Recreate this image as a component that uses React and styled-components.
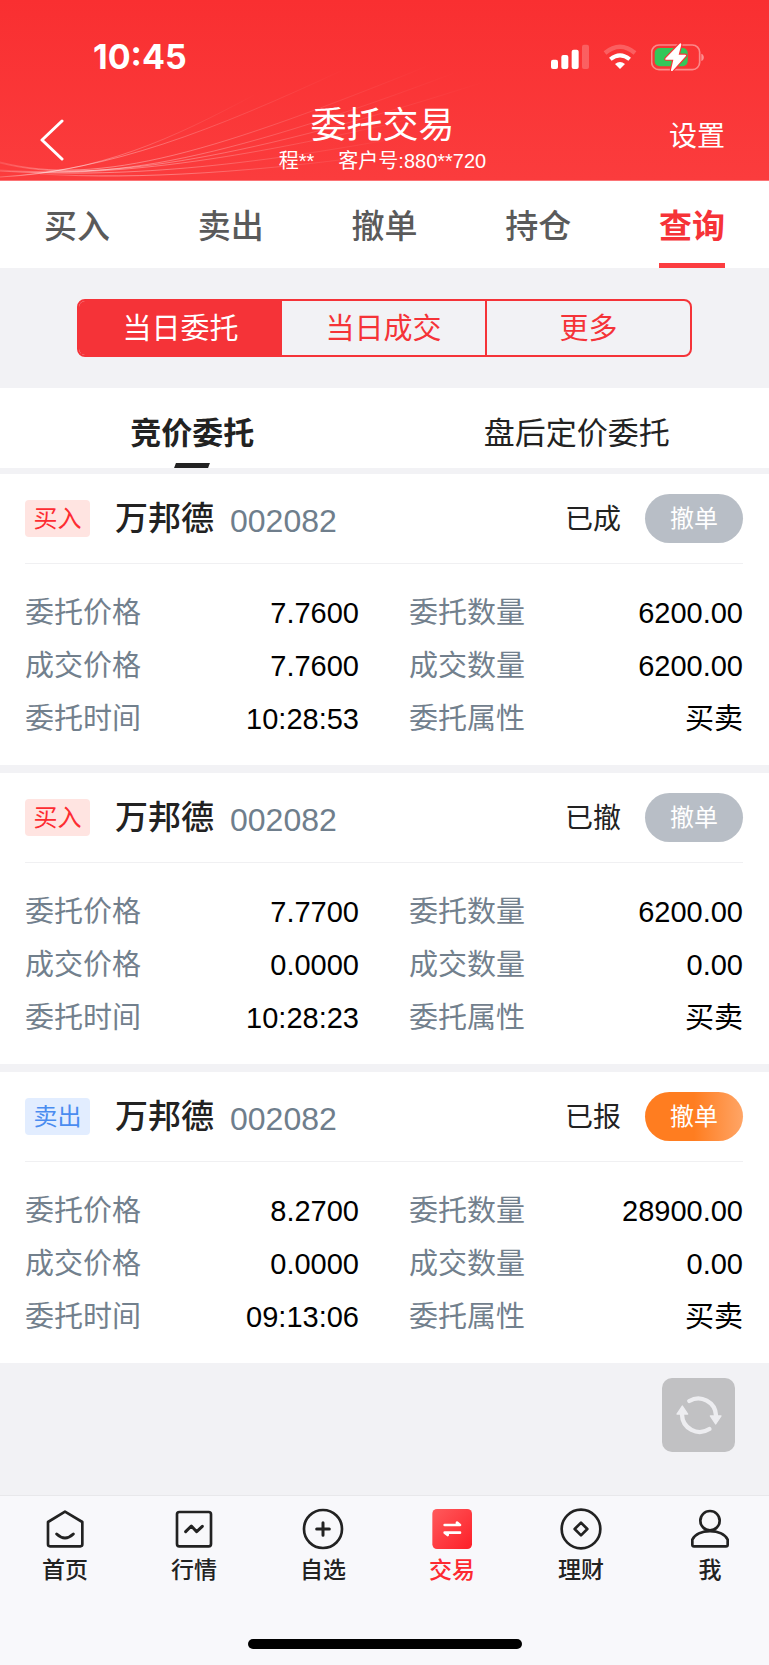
import React from "react";
import styled, { createGlobalStyle, css } from "styled-components";

const GlobalStyle = createGlobalStyle`
  * { box-sizing: border-box; }
  body {
    margin: 0;
    background: #f2f2f5;
    font-family: "Liberation Sans", "Noto Sans CJK SC", sans-serif;
    color: #222;
  }
  button { font: inherit; border: 0; padding: 0; background: none; cursor: pointer; }
  a { color: inherit; text-decoration: none; }
  h1, h2, dl, dd { margin: 0; font-weight: 400; }
  svg { display: block; }
`;

const Page = styled.div`
  min-height: 100vh;
  display: flex;
  flex-direction: column;
`;

const Header = styled.header`
  position: relative;
  background: linear-gradient(#f92f31, #fb3c3d);
  border-bottom: 1px solid #fc7476;
  color: #fff;
`;

const Waves = styled.svg`
  position: absolute;
  left: 0;
  bottom: 0;
`;

const StatusBar = styled.div`
  position: relative;
  display: flex;
  justify-content: space-between;
  align-items: center;
  height: 100px;
  padding: 14px 64px 0 93px;
`;

const Clock = styled.time`
  font: 700 34px/40px Inter, sans-serif;
`;

const StatusIcons = styled.div`
  display: flex;
  align-items: center;
  gap: 14px;
`;

const TitleBar = styled.div`
  position: relative;
  display: grid;
  grid-template-columns: 1fr auto 1fr;
  align-items: center;
  height: 80px;
  padding: 0 44px 0 40px;
`;

const BackButton = styled.button`
  justify-self: start;
  color: #fff;
`;

const Titles = styled.div`
  text-align: center;
`;

const Title = styled.h1`
  font-size: 36px;
  line-height: 42px;
`;

const Account = styled.div`
  display: flex;
  justify-content: center;
  gap: 24px;
  font-size: 20px;
  line-height: 28px;
`;

const SettingsLink = styled.a`
  justify-self: end;
  font-size: 28px;
  line-height: 36px;
  padding-bottom: 6px;
`;

const MainTabs = styled.nav`
  display: flex;
  height: 87px;
  background: #fff;
`;

const MainTab = styled.button`
  flex: 1;
  display: flex;
  justify-content: center;
  font-size: 33px;
  line-height: 40px;
  font-weight: ${(p) => (p.$active ? 700 : 500)};
  color: ${(p) => (p.$active ? "#f63338" : "#5a5a5a")};

  span {
    height: 87px;
    padding-top: 26px;
    border-bottom: 5px solid ${(p) => (p.$active ? "#fc3d40" : "transparent")};
  }
`;

const SegmentBar = styled.div`
  padding: 31px 10%;
`;

const Segments = styled.div`
  display: flex;
  height: 58px;
  border: 2px solid #f53338;
  border-radius: 8px;
  overflow: hidden;
`;

const Segment = styled.button`
  flex: 1;
  padding-bottom: 4px;
  font-size: 29px;
  color: ${(p) => (p.$active ? "#fff" : "#f53338")};
  background: ${(p) => (p.$active ? "#f53338" : "transparent")};

  & + & + & { border-left: 2px solid #f53338; }
`;

const SubTabs = styled.div`
  display: flex;
  height: 86px;
  background: #fff;
  border-bottom: 6px solid #f2f2f5;
`;

const SubTab = styled.button`
  position: relative;
  flex: 1;
  padding-top: 4px;
  font-size: 31px;
  color: #222;
  font-weight: ${(p) => (p.$active ? 700 : 400)};

  ${(p) =>
    p.$active &&
    css`
      &::after {
        content: "";
        position: absolute;
        left: 50%;
        bottom: 0;
        width: 34px;
        height: 5px;
        margin-left: -17px;
        background: #222;
        transform: skewX(-20deg);
      }
    `}
`;

const Orders = styled.main`
  display: grid;
  gap: 8px;
`;

const OrderCard = styled.article`
  background: #fff;
  padding: 0 26px 0 25px;
`;

const OrderHead = styled.div`
  display: flex;
  align-items: center;
  height: 90px;
  border-bottom: 1px solid #f0f0f2;
`;

const SideTag = styled.span`
  width: 65px;
  margin-right: 25px;
  border-radius: 4px;
  text-align: center;
  font-size: 24px;
  line-height: 37px;
  color: ${(p) => (p.$sell ? "#4a8cf0" : "#fd2c32")};
  background: ${(p) => (p.$sell ? "#e2edff" : "#ffe4e1")};
`;

const StockName = styled.h2`
  font-size: 33px;
  line-height: 40px;
  font-weight: 500;
  margin-right: 16px;
`;

const StockCode = styled.span`
  padding-top: 4px;
  font-size: 32px;
  line-height: 40px;
  color: #6f7e8c;
`;

const OrderState = styled.span`
  margin: 0 24px 0 auto;
  padding-bottom: 4px;
  font-size: 28px;
`;

const CancelButton = styled.button`
  width: 98px;
  height: 49px;
  padding-bottom: 4px;
  border-radius: 25px;
  font-size: 24px;
  color: #fff;
  background: linear-gradient(90deg, #ff7d20 50%, #ffa566);

  &:disabled {
    color: #fff;
    background: #b8bec6;
    cursor: default;
  }
`;

const Fields = styled.dl`
  display: grid;
  grid-template-columns: 1fr 1fr;
  column-gap: 50px;
  padding: 23px 0 19px;
`;

const Field = styled.div`
  display: flex;
  justify-content: space-between;
  font-size: 29px;
  line-height: 53px;
`;

const Label = styled.dt`
  color: #72808d;
`;

const Value = styled.dd`
  color: #000;
`;

const Tools = styled.div`
  flex: 1;
  display: flex;
  justify-content: flex-end;
  align-items: flex-start;
  padding: 15px 34px 43px;
`;

const RefreshButton = styled.button`
  display: grid;
  place-items: center;
  width: 73px;
  height: 74px;
  border-radius: 10px;
  background: #c1c1c3;
`;

const BottomBar = styled.footer`
  background: #f8f8fb;
  border-top: 1px solid #e8e8eb;
`;

const BottomNav = styled.nav`
  display: flex;
  justify-content: space-between;
  padding: 12px 9px 0 15px;
`;

const NavLink = styled.a`
  display: flex;
  flex-direction: column;
  align-items: center;
  gap: 5px;
  width: 100px;
  font-size: 23px;
  line-height: 30px;
  font-weight: 500;
  color: ${(p) => (p.$active ? "#fd2a31" : "#222")};
`;

const HomeIndicator = styled.div`
  width: 274px;
  height: 10px;
  margin: 54px auto 16px;
  border-radius: 5px;
  background: #000;
`;

const HeaderWaves = () => (
  <Waves width="520" height="130" viewBox="0 50 520 130" fill="none" aria-hidden="true">
    <defs>
      <linearGradient id="fade" x1="0" y1="0" x2="1" y2="0">
        <stop offset="0" stopColor="#fff" stopOpacity=".12" />
        <stop offset=".18" stopColor="#fff" stopOpacity=".4" />
        <stop offset=".4" stopColor="#fff" stopOpacity=".3" />
        <stop offset=".7" stopColor="#fff" stopOpacity=".12" />
        <stop offset="1" stopColor="#fff" stopOpacity="0" />
      </linearGradient>
    </defs>
    <g stroke="url(#fade)" strokeWidth="1">
      <path d="M0 177C100 172 170 140 256 94" />
      <path d="M0 177C110 170 210 132 345 69" />
      <path d="M0 162C100 188 220 150 430 65" />
      <path d="M0 163C100 188 240 154 457 72" />
      <path d="M0 170C120 178 240 160 484 82" />
      <path d="M0 171C120 178 250 158 440 112" />
      <path d="M0 171C120 178 240 168 420 134" />
      <path d="M40 174C140 180 260 172 400 152" />
    </g>
  </Waves>
);

const SignalIcon = () => (
  <svg width="38" height="26" viewBox="0 0 114 78" fill="#fff">
    <rect x="0" y="47" width="21" height="28" rx="6" />
    <rect x="31" y="33" width="21" height="42" rx="6" />
    <rect x="62" y="17" width="21" height="58" rx="6" />
    <rect x="93" y="2" width="21" height="73" rx="6" opacity=".22" />
  </svg>
);

const WifiIcon = () => (
  <svg width="34" height="26" viewBox="0 0 102 78" fill="none">
    <path d="M6 27Q51-10 96 27" stroke="#fff" strokeOpacity=".22" strokeWidth="13" />
    <path d="M22 46Q51 22 80 46" stroke="#fff" strokeWidth="12" />
    <path d="M36 60Q51 48 66 60L51 75Z" fill="#fff" />
  </svg>
);

const BatteryIcon = () => (
  <svg width="54" height="28" viewBox="0 0 162 84" fill="none">
    <rect x="2" y="6" width="144" height="74" rx="22" stroke="#fff" strokeOpacity=".42" strokeWidth="5" />
    <path d="M151 32c10 3 10 19 0 22Z" fill="#fff" fillOpacity=".45" />
    <rect x="11" y="15" width="99" height="55" rx="15" fill="#34c759" />
    <path
      d="M86 2L44 46q-3 4 2 4H67L60 81q0 5 5 2L104 40q3-5-2-5H83L91 5q-1-6-5-3Z"
      fill="#fff"
      stroke="#f93437"
      strokeWidth="7"
      paintOrder="stroke"
    />
  </svg>
);

const BackIcon = () => (
  <svg width="28" height="44" viewBox="0 0 28 44" fill="none" stroke="#fff" strokeWidth="3" strokeLinecap="round" strokeLinejoin="round">
    <path d="M22 3L2 22L22 41" />
  </svg>
);

const RefreshIcon = () => (
  <svg width="46" height="42" viewBox="0 0 138 126" fill="none" stroke="#ededf0" strokeWidth="13" strokeLinecap="round">
    <path d="M40 21A53 53 0 0 1 120 64" />
    <path d="M100 105A53 53 0 0 1 18 62" />
    <path d="M103 66H135L119 90Z" fill="#ededf0" strokeWidth="4" strokeLinejoin="round" />
    <path d="M3 60H35L19 36Z" fill="#ededf0" strokeWidth="4" strokeLinejoin="round" />
  </svg>
);

const NavIcon = ({ children }) => (
  <svg width="42" height="42" viewBox="0 0 126 126" fill="none" stroke="currentColor" strokeWidth="8" strokeLinecap="round" strokeLinejoin="round" aria-hidden="true">
    {children}
  </svg>
);

const NAV = [
  {
    label: "首页",
    icon: (
      <>
        <path d="M63 11L12 42V109Q12 115 18 115H109Q115 115 115 109V42Z" />
        <path d="M38 78Q63 102 88 78" strokeWidth="9" />
      </>
    ),
  },
  {
    label: "行情",
    icon: (
      <>
        <rect x="12" y="12" width="102" height="103" rx="7" />
        <path d="M38 71L55 54L71 71L88 55" strokeWidth="9" />
      </>
    ),
  },
  {
    label: "自选",
    icon: (
      <>
        <circle cx="63" cy="63" r="57" />
        <path d="M63 44V82M44 63H82" strokeWidth="9" />
      </>
    ),
  },
  {
    label: "交易",
    active: true,
    icon: (
      <>
        <defs>
          <linearGradient id="trade" x1="0" y1="0" x2="1" y2="1">
            <stop offset="0" stopColor="#ff5a5c" />
            <stop offset="1" stopColor="#fd1f28" />
          </linearGradient>
        </defs>
        <rect x="4" y="3" width="119" height="120" rx="14" fill="url(#trade)" stroke="none" />
        <path d="M41 51H87L78 44V51M87 74H41L50 81V74" stroke="#fff" strokeWidth="8" />
      </>
    ),
  },
  {
    label: "理财",
    icon: (
      <>
        <circle cx="63" cy="63" r="58" />
        <path d="M63 44L82 63L63 82L44 63Z" />
      </>
    ),
  },
  {
    label: "我",
    icon: (
      <>
        <circle cx="63" cy="38" r="29" />
        <path d="M10 95C27 61 99 61 116 95V110Q116 115 111 115H15Q10 115 10 110Z" />
      </>
    ),
  },
];

const ORDERS = [
  { side: "买入", state: "已成", fields: [["委托价格", "7.7600"], ["委托数量", "6200.00"], ["成交价格", "7.7600"], ["成交数量", "6200.00"], ["委托时间", "10:28:53"], ["委托属性", "买卖"]] },
  { side: "买入", state: "已撤", fields: [["委托价格", "7.7700"], ["委托数量", "6200.00"], ["成交价格", "0.0000"], ["成交数量", "0.00"], ["委托时间", "10:28:23"], ["委托属性", "买卖"]] },
  { side: "卖出", state: "已报", open: true, fields: [["委托价格", "8.2700"], ["委托数量", "28900.00"], ["成交价格", "0.0000"], ["成交数量", "0.00"], ["委托时间", "09:13:06"], ["委托属性", "买卖"]] },
];

const Order = ({ order }) => (
  <OrderCard>
    <OrderHead>
      <SideTag $sell={order.side === "卖出"}>{order.side}</SideTag>
      <StockName>万邦德</StockName>
      <StockCode>002082</StockCode>
      <OrderState>{order.state}</OrderState>
      <CancelButton disabled={!order.open}>撤单</CancelButton>
    </OrderHead>
    <Fields>
      {order.fields.map(([label, value]) => (
        <Field key={label}>
          <Label>{label}</Label>
          <Value>{value}</Value>
        </Field>
      ))}
    </Fields>
  </OrderCard>
);

export default function App() {
  return (
    <Page>
      <GlobalStyle />
      <Header>
        <HeaderWaves />
        <StatusBar>
          <Clock>10:45</Clock>
          <StatusIcons>
            <SignalIcon />
            <WifiIcon />
            <BatteryIcon />
          </StatusIcons>
        </StatusBar>
        <TitleBar>
          <BackButton aria-label="返回">
            <BackIcon />
          </BackButton>
          <Titles>
            <Title>委托交易</Title>
            <Account>
              <span>程**</span>
              <span>客户号:880**720</span>
            </Account>
          </Titles>
          <SettingsLink href="#settings">设置</SettingsLink>
        </TitleBar>
      </Header>
      <MainTabs>
        {["买入", "卖出", "撤单", "持仓", "查询"].map((name) => (
          <MainTab key={name} $active={name === "查询"}>
            <span>{name}</span>
          </MainTab>
        ))}
      </MainTabs>
      <SegmentBar>
        <Segments>
          {["当日委托", "当日成交", "更多"].map((name, i) => (
            <Segment key={name} $active={i === 0}>{name}</Segment>
          ))}
        </Segments>
      </SegmentBar>
      <SubTabs>
        <SubTab $active>竞价委托</SubTab>
        <SubTab>盘后定价委托</SubTab>
      </SubTabs>
      <Orders>
        {ORDERS.map((order) => (
          <Order key={order.state} order={order} />
        ))}
      </Orders>
      <Tools>
        <RefreshButton aria-label="刷新">
          <RefreshIcon />
        </RefreshButton>
      </Tools>
      <BottomBar>
        <BottomNav>
          {NAV.map(({ label, active, icon }) => (
            <NavLink key={label} href={"#" + label} $active={active}>
              <NavIcon>{icon}</NavIcon>
              {label}
            </NavLink>
          ))}
        </BottomNav>
        <HomeIndicator />
      </BottomBar>
    </Page>
  );
}
